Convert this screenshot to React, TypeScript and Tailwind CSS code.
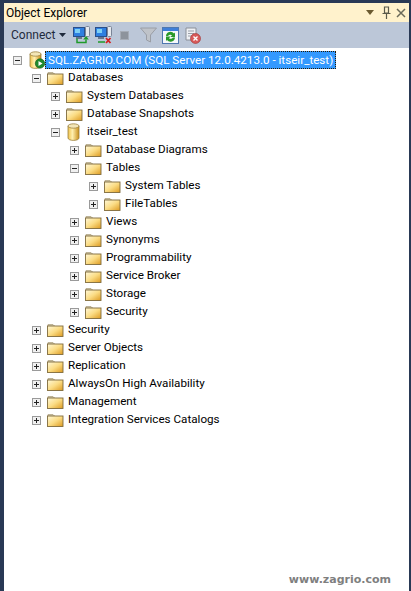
const font = { fontFamily: 'Roboto, sans-serif' };

type Node = { label: string; depth: number; icon: "folder" | "db" | "server"; open?: boolean };

const rows: Node[] = [
  { label: "SQL.ZAGRIO.COM (SQL Server 12.0.4213.0 - itseir_test)", depth: 0, icon: "server", open: true },
  { label: "Databases", depth: 1, icon: "folder", open: true },
  { label: "System Databases", depth: 2, icon: "folder" },
  { label: "Database Snapshots", depth: 2, icon: "folder" },
  { label: "itseir_test", depth: 2, icon: "db", open: true },
  { label: "Database Diagrams", depth: 3, icon: "folder" },
  { label: "Tables", depth: 3, icon: "folder", open: true },
  { label: "System Tables", depth: 4, icon: "folder" },
  { label: "FileTables", depth: 4, icon: "folder" },
  { label: "Views", depth: 3, icon: "folder" },
  { label: "Synonyms", depth: 3, icon: "folder" },
  { label: "Programmability", depth: 3, icon: "folder" },
  { label: "Service Broker", depth: 3, icon: "folder" },
  { label: "Storage", depth: 3, icon: "folder" },
  { label: "Security", depth: 3, icon: "folder" },
  { label: "Security", depth: 1, icon: "folder" },
  { label: "Server Objects", depth: 1, icon: "folder" },
  { label: "Replication", depth: 1, icon: "folder" },
  { label: "AlwaysOn High Availability", depth: 1, icon: "folder" },
  { label: "Management", depth: 1, icon: "folder" },
  { label: "Integration Services Catalogs", depth: 1, icon: "folder" },
];

function Expander({ open }: { open?: boolean }) {
  return (
    <svg width="9" height="9" viewBox="0 0 9 9" className="shrink-0">
      <rect x="0.5" y="0.5" width="8" height="8" fill="#f0f0f0" stroke="#9a9a9a" />
      <path d="M2 4.5h5" stroke="#222" />
      {!open && <path d="M4.5 2v5" stroke="#222" />}
    </svg>
  );
}

function FolderIcon() {
  return (
    <svg width="17" height="14" viewBox="0 0 17 14" className="shrink-0">
      <defs>
        <linearGradient id="fold" x1="0" y1="0" x2="1" y2="1">
          <stop offset="0" stopColor="#fff8d8" />
          <stop offset="0.5" stopColor="#fbdc84" />
          <stop offset="1" stopColor="#dd9a20" />
        </linearGradient>
      </defs>
      <path d="M1 3V1.500h5L7.500 3z" fill="#ece4cc" stroke="#b0a484" strokeWidth="0.8" />
      <rect x="0.500" y="3" width="15.500" height="10.500" fill="url(#fold)" stroke="#7f6a3c" strokeWidth="0.9" />
    </svg>
  );
}

function DbIcon({ badge }: { badge?: boolean }) {
  return (
    <svg width="17" height="18" viewBox="0 0 17 18" className="shrink-0">
      <defs>
        <linearGradient id="can" x1="0" y1="0" x2="1" y2="0">
          <stop offset="0" stopColor="#f0c24a" />
          <stop offset="0.4" stopColor="#fff0b0" />
          <stop offset="1" stopColor="#c98f18" />
        </linearGradient>
      </defs>
      <path d="M2 3v12c0 1.400 2.400 2.400 5.500 2.400S13 16.400 13 15V3z" fill="url(#can)" stroke="#9a8040" strokeWidth="0.8" />
      <ellipse cx="7.500" cy="3" rx="5.500" ry="2.200" fill="#f3e6b8" stroke="#9a8040" strokeWidth="0.8" />
      {badge && (
        <g>
          <circle cx="12" cy="12.500" r="4.700" fill="#1f8a2e" stroke="#0f5a1a" strokeWidth="0.6" />
          <path d="M10.500 10v5l4-2.500z" fill="#fff" />
        </g>
      )}
    </svg>
  );
}

function Computer() {
  return (
    <g>
      <rect x="0.500" y="1.500" width="11" height="9" fill="#2f7fe0" stroke="#2a4f8a" />
      <rect x="2" y="3" width="5" height="4" fill="#7fd0f4" />
      <rect x="12.500" y="0.500" width="4" height="10" rx="1" fill="#e4e8ee" stroke="#7a8496" />
      <path d="M3 12h6" stroke="#44556e" strokeWidth="1.400" />
    </g>
  );
}

function ToolbarIcons() {
  return (
    <div className="flex items-center ml-[7px]">
      <svg width="17" height="18" viewBox="0 0 17 18">
        <Computer />
        <path d="M4 12.500v4h9v-3" fill="none" stroke="#1f9a2a" strokeWidth="1.500" />
        <path d="M13 10l2.800 3.500h-5.600z" fill="#1f9a2a" />
      </svg>
      <svg width="17" height="18" viewBox="0 0 17 18" className="ml-[5px]">
        <Computer />
        <path d="M3 16h7" stroke="#1f9a2a" strokeWidth="1.500" />
        <path d="M11 12l4.500 5M15.500 12l-4.500 5" stroke="#d42020" strokeWidth="1.800" />
      </svg>
      <div className="w-[9px] h-[9px] ml-[8px] bg-[#8d939c] border border-[#a6acb6]" />
      <svg width="17" height="16" viewBox="0 0 17 16" className="ml-[11px]">
        <path d="M0.500 1h16L10.500 8v7l-4-2V8z" fill="#bfc3c9" stroke="#9a9ea6" />
      </svg>
      <svg width="17" height="17" viewBox="0 0 17 17" className="ml-[5px]">
        <rect x="0.500" y="0.500" width="16" height="16" fill="#f6f8fb" stroke="#4f78b0" />
        <rect x="1" y="1" width="15" height="3" fill="#3f7fd8" />
        <path d="M4 9a4.500 4.500 0 0 1 8-2.500l1-1V10H8.500L10 8.300A2.600 2.600 0 0 0 6 9z" fill="#2a9a2a" />
        <path d="M13 10.500a4.500 4.500 0 0 1-8 2.500l-1 1V9.500h4.500L7 11.200a2.600 2.600 0 0 0 4-.7z" fill="#2a9a2a" />
      </svg>
      <svg width="17" height="17" viewBox="0 0 17 17" className="ml-[5px]">
        <path d="M2 1h10v12H2z" fill="#eef0f4" stroke="#8a8f98" />
        <path d="M4 4h6M4 6.500h6M4 9h4" stroke="#9aa0aa" />
        <circle cx="11.500" cy="11.500" r="5" fill="#d85a5a" stroke="#a03030" strokeWidth="0.600" />
        <path d="M9.500 9.500l4 4M13.500 9.500l-4 4" stroke="#fff" strokeWidth="1.400" />
      </svg>
    </div>
  );
}

function TreeRow({ node, selected }: { node: Node; selected?: boolean }) {
  return (
    <div
      className="h-[18px] flex items-center whitespace-nowrap"
      style={{ paddingLeft: 9 + node.depth * 19 }}
    >
      <Expander open={node.open} />
      <span className="ml-[6px] flex items-center">
        {node.icon === "folder" && <FolderIcon />}
        {node.icon === "db" && <DbIcon />}
        {node.icon === "server" && <DbIcon badge />}
      </span>
      {selected ? (
        <span className="h-[18px] px-[2px] leading-[16px] bg-[#3399ff] text-white border border-dotted border-[#2b1a00]">
          {node.label}
        </span>
      ) : (
        <span className="ml-[4px] text-black">{node.label}</span>
      )}
    </div>
  );
}

export default function App() {
  return (
    <div className="w-[411px] h-[591px] overflow-hidden bg-[#293955] flex flex-col pt-[3px] pl-[4px] pr-[2px] text-[11.65px]" style={font}>
      <div className="h-[19px] shrink-0 bg-[#fff2cc] flex items-center pl-[2px] pr-[3px]">
        <span className="text-[12px] text-black">Object Explorer</span>
        <div className="ml-auto flex items-center">
          <svg width="8" height="5" viewBox="0 0 8 5"><path d="M0 0h8L4 5z" fill="#6b5a30" /></svg>
          <svg width="9" height="13" viewBox="0 0 9 13" className="ml-[8px]">
            <path d="M2.500 1h4v6h-4zM0.500 7.500h8M4.500 8v5" fill="none" stroke="#5a5a4a" strokeWidth="1.200" />
          </svg>
          <svg width="10" height="10" viewBox="0 0 10 10" className="ml-[5px]">
            <path d="M1 1l8 8M9 1l-8 8" stroke="#6a6a5a" strokeWidth="1.500" />
          </svg>
        </div>
      </div>
      <div className="h-[26px] shrink-0 bg-[#bcc7d8] flex items-center pl-[7px]">
        <span className="text-[#1e2a3c] text-[12px]">Connect</span>
        <svg width="7" height="4" viewBox="0 0 7 4" className="ml-[4px]"><path d="M0 0h7L3.500 4z" fill="#1e2a3c" /></svg>
        <ToolbarIcons />
      </div>
      <div className="flex-1 relative bg-white pt-[3px]">
        {rows.map((node, i) => (
          <TreeRow key={i} node={node} selected={i === 0} />
        ))}
        <span
          className="absolute right-[18px] bottom-[3px] text-[11px] font-bold text-[#7f7f7f]"
          style={{ fontFamily: '"DejaVu Sans", sans-serif' }}
        >
          www.zagrio.com
        </span>
      </div>
    </div>
  );
}
